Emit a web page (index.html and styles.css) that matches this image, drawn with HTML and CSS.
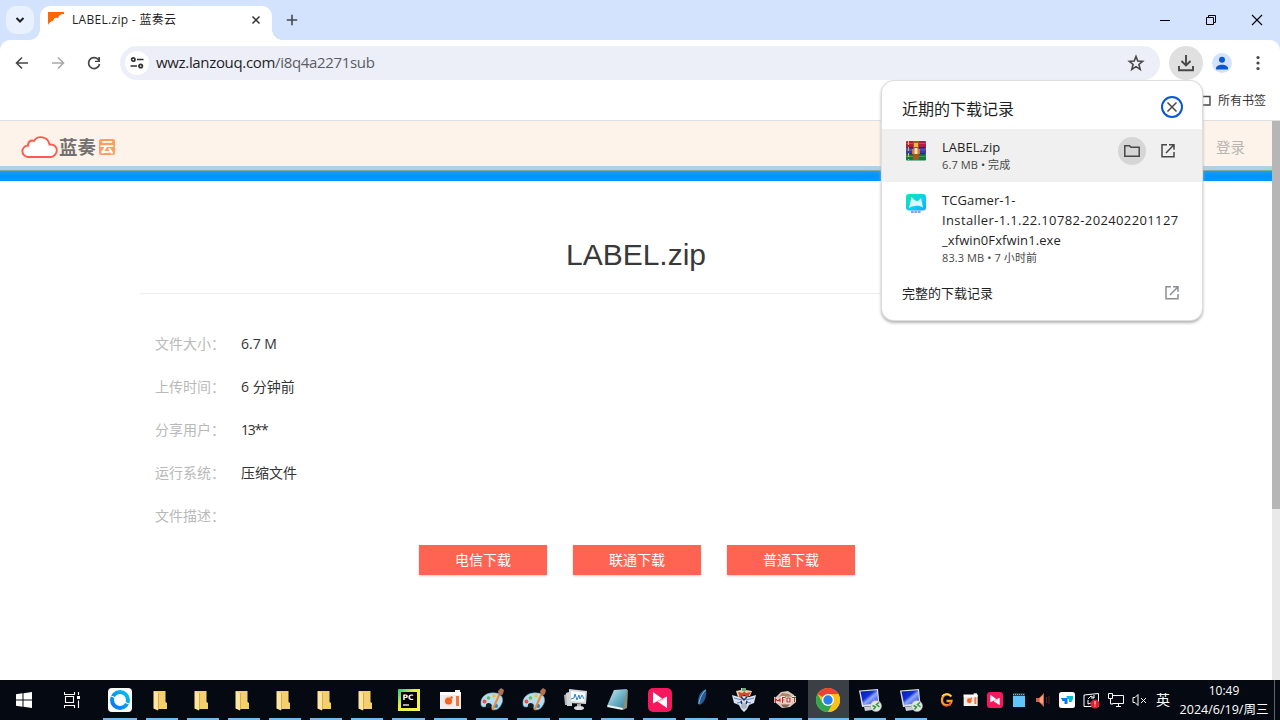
FILE: index.html
```html
<!DOCTYPE html>
<html lang="zh-CN">
<head>
<meta charset="utf-8">
<title>LABEL.zip - 蓝奏云</title>
<link rel="stylesheet" href="styles.css">
</head>
<body>
<svg class="defs" width="0" height="0">
  <defs>
    <linearGradient id="fold" x1="0" x2="1"><stop offset="0" stop-color="#f3cf74"/><stop offset="1" stop-color="#f5cf6b"/></linearGradient>
    <linearGradient id="screen" x1="0" x2="1" y2="1"><stop offset="0" stop-color="#0618b8"/><stop offset=".4" stop-color="#1230d8"/><stop offset=".55" stop-color="#8fa8fa"/><stop offset="1" stop-color="#1930c8"/></linearGradient>
    <linearGradient id="pcg" x1="0" y1="0" x2="1" y2="1"><stop offset="0" stop-color="#12ce83"/><stop offset=".4" stop-color="#e8ef3c"/><stop offset="1" stop-color="#fcf84a"/></linearGradient>
    <linearGradient id="note" x1="0" y1="0" x2="1" y2="1"><stop offset="0" stop-color="#d4f0f5"/><stop offset=".5" stop-color="#72b4c8"/><stop offset="1" stop-color="#367d94"/></linearGradient>
    <linearGradient id="tc" x1="0" y1="0" x2="1" y2="1"><stop offset="0" stop-color="#0be9a5"/><stop offset=".6" stop-color="#10ccf5"/><stop offset="1" stop-color="#12a6ff"/></linearGradient>
    <linearGradient id="ring" x1="0" y1="1" x2="1" y2="0"><stop offset="0" stop-color="#0874ff"/><stop offset="1" stop-color="#0bc1e2"/></linearGradient>
    <symbol id="folder" viewBox="0 0 24 24"><path d="M4 3h11.500v11l1.500 1v6H4z" fill="url(#fold)"/><path d="M3.500 3L8 5v17.500l-4.500-2z" fill="#ffe5a0"/><path d="M8 5v17.500L9 20V5z" fill="#d9ac50"/></symbol>
    <symbol id="recorder" viewBox="0 0 24 24"><path d="M1 4h15V2h5v2h1v17H1z" fill="#eee"/><path d="M1 4h21v3H1z" fill="#fff"/><circle cx="9.500" cy="13" r="5" fill="#fbdacb"/><circle cx="9.500" cy="13" r="3.500" fill="#ee6424"/><circle cx="12.500" cy="9.500" r="1.200" fill="#e65f20"/><path d="M17 8h3v10h-3z" fill="#ef7a38"/></symbol>
    <symbol id="paint" viewBox="0 0 24 24"><path d="M1 16C0 9 7 4 15 5c8 0 9 8 6 12-2 4-6 6-9 4-1-2 1-4-1-5-2-1-4 3-7 3-2 0-3-1-3-3z" fill="#b7dcef" stroke="#72a9c7" stroke-width=".6"/><circle cx="4.500" cy="13.500" r="1.900" fill="#ed5145"/><circle cx="8.500" cy="10" r="1.800" fill="#66bc4a"/><circle cx="14" cy="8" r="1.800" fill="#f3c035"/><circle cx="8.500" cy="17.500" r="2.600" fill="#101b24"/><circle cx="16" cy="18" r="2" fill="#2781bd"/><path d="M20 5L12.500 22" stroke="#e78b34" stroke-width="2"/><path d="M19 7l-1-4 3-3 3 2-1 4-3 2z" fill="#af7350"/></symbol>
    <symbol id="pink" viewBox="0 0 24 24"><rect width="24" height="24" rx="5" fill="#f5185c"/><path d="M5 4l9 6.500L5 15.500zM19 8.500v11.500l-9.500-6.500z" fill="#fff"/><path d="M5 15.500l14-7-5 4.800-4.500.2z" fill="#fbc0d2"/></symbol>
    <symbol id="remote" viewBox="0 0 24 24"><path d="M6 19l8-1v4l-7 1z" fill="#c9ced5"/><path d="M1 2.500l19-1.500 1.500 16L4 19z" fill="#dbe0e8"/><path d="M2.500 3.500l16.500-1.300 1.200 12.800-15 2z" fill="url(#screen)"/><circle cx="18" cy="18" r="5.500" fill="#e4e5e2" stroke="#aaa" stroke-width=".5"/><path d="M14.500 17.500l3 1.500-2 2.500M21 14.500l-2.500 2 3 2.500" fill="none" stroke="#2c9d41" stroke-width="1.500"/></symbol>
    <symbol id="launch" viewBox="0 0 16 16"><path d="M7 1.800H2v12h12V9M9 1.800h5v5M13.500 2.300L6 10" fill="none" stroke="currentColor" stroke-width="1.500"/></symbol>
  </defs>
</svg>
<div class="desktop">
  <header class="tabs">
    <button class="tab-search"><svg width="12" height="12" viewBox="0 0 12 12"><path d="M2.500 4l3.500 3.500L9.500 4" fill="none" stroke="#202124" stroke-width="2"/></svg></button>
    <div class="tab">
      <svg class="favicon" width="17" height="16" viewBox="0 0 17 16"><path d="M0 0h16v2c-4 0-5 2-6 4-3-1-4 0-5 3-2 0-4 2-5 4z" fill="#ff6700"/></svg>
      <span class="tab-title">LABEL.zip - 蓝奏云</span>
      <svg class="tab-close" width="10" height="10" viewBox="0 0 10 10"><path d="M1.500 1.500l7 7M8.500 1.500l-7 7" stroke="#303134" stroke-width="1.500"/></svg>
    </div>
    <svg class="new-tab" width="12" height="12" viewBox="0 0 12 12"><path d="M6 .8v10.400M.8 6h10.400" stroke="#43474e" stroke-width="1.600"/></svg>
    <div class="window-buttons">
      <svg width="12" height="12" viewBox="0 0 12 12"><path d="M1 6.500h10" stroke="#000"/></svg>
      <svg width="12" height="12" viewBox="0 0 12 12"><path d="M1.500 3.500h7v7h-7zM3.500 3V1.500h7v7H9" fill="none" stroke="#000"/></svg>
      <svg width="12" height="12" viewBox="0 0 12 12"><path d="M1 1l10 10M11 1L1 11" stroke="#000" stroke-width="1.100"/></svg>
    </div>
  </header>
  <nav class="toolbar">
    <svg class="nav-icon" viewBox="0 0 16 16"><path d="M14 8H3M8 2.500L2.500 8 8 13.500" fill="none" stroke="#474747" stroke-width="1.600"/></svg>
    <svg class="nav-icon" viewBox="0 0 16 16"><path d="M2 8h11M8 2.500L13.500 8 8 13.500" fill="none" stroke="#aaa" stroke-width="1.600"/></svg>
    <svg class="nav-icon" viewBox="0 0 16 16"><path d="M13.500 9A5.500 5.500 0 1 1 12 4.200L13.300 6" fill="none" stroke="#474747" stroke-width="1.700"/><path d="M14 2v5H9V5.700h3.300V2z" fill="#474747"/></svg>
    <div class="address">
      <span class="site-info"><svg width="14" height="14" viewBox="0 0 14 14"><g fill="none" stroke="#303134" stroke-width="1.700"><circle cx="3.300" cy="3.500" r="1.700"/><circle cx="10.700" cy="10" r="1.700"/><path d="M7 3.500h6.500M.5 10H7"/></g></svg></span>
      <span class="url">wwz.lanzouq.com<span class="url-path">/i8q4a2271sub</span></span>
      <svg class="star" width="18" height="18" viewBox="0 0 18 18"><path d="M9 2.500l1.800 4.600 4.800.3-3.700 3.100 1.300 4.900L9 12.700l-4.200 2.700 1.300-4.900-3.700-3.100 4.800-.3z" fill="none" stroke="#474747" stroke-width="1.600"/></svg>
    </div>
    <span class="dl-button"><svg width="18" height="18" viewBox="0 0 18 18"><path d="M9 1v10M4.500 7L9 11.500 13.500 7M2 12v4.200h14V12" fill="none" stroke="#474747" stroke-width="1.900"/></svg></span>
    <span class="profile"><svg width="20" height="20" viewBox="0 0 20 20"><circle cx="10" cy="6.700" r="3" fill="#0b57d0"/><path d="M4 15.500c0-5 12-5 12 0v1H4z" fill="#0b57d0"/></svg></span>
    <svg class="more" width="4" height="16" viewBox="0 0 4 16"><g fill="#474747"><circle cx="2" cy="2.500" r="1.600"/><circle cx="2" cy="8" r="1.600"/><circle cx="2" cy="13.500" r="1.600"/></g></svg>
  </nav>
  <div class="bookmarks"><svg width="14" height="14" viewBox="0 0 14 14"><path d="M1 3.500h12v8.500H1z" fill="none" stroke="#474747" stroke-width="1.400"/></svg><span>所有书签</span></div>
  <main class="viewport">
    <div class="page">
      <div class="site-head">
        <svg class="cloud" width="38" height="24" viewBox="0 0 38 24"><path d="M7 22a5.700 5.700 0 0 1 .3-11.500C6.500 7 10 4.500 13 6c3.500-6 14-5 15.500 3.500 5-.5 7.500 3 7.300 6S33 22 30 22z" fill="#fff" stroke="#fb5a4c" stroke-width="1.900"/></svg>
        <b class="brand">蓝奏</b><b class="brand-yun">云</b>
        <span class="login">登录</span>
      </div>
      <div class="stripe-pale"></div><div class="stripe-blue"></div>
      <h1 class="file-name">LABEL.zip</h1>
      <dl class="info">
        <dt>文件大小：</dt><dd>6.7 M</dd>
        <dt>上传时间：</dt><dd>6 分钟前</dd>
        <dt>分享用户：</dt><dd class="user">13**</dd>
        <dt>运行系统：</dt><dd>压缩文件</dd>
        <dt>文件描述：</dt><dd></dd>
      </dl>
      <div class="actions"><a>电信下载</a><a>联通下载</a><a>普通下载</a></div>
    </div>
    <div class="scrollbar"><div class="thumb"></div></div>
  </main>
  <footer class="taskbar">
    <div class="start"><svg width="16" height="16" viewBox="0 0 16 16"><path d="M0 2.300L6.500 1.300v6.200H0zM7.500 1.200L16 0v7.500H7.500zM0 8.500h6.500v6.200L0 13.700zM7.500 8.500H16V16l-8.500-1.200z" fill="#fff"/></svg></div>
    <div class="task-view"><svg width="17" height="16" viewBox="0 0 17 16"><path d="M.5 0v2.500h10V0M1.500 4.500h8v6h-8zM.5 16v-2.500h10V16M14.500 0v3M14.500 8.500V16" fill="none" stroke="#fff" stroke-width="1.100"/><path d="M13 4h3v3h-3z" fill="#fff"/></svg></div>
    <div class="apps">
      <div class="app"><svg viewBox="0 0 24 24"><rect width="24" height="24" rx="4" fill="#fff"/><circle cx="12" cy="12" r="8" fill="none" stroke="url(#ring)" stroke-width="4"/><path d="M3 8l5 2M16 14l5 2" stroke="#fff" stroke-width="1.300"/></svg></div>
      <div class="app narrow"><svg viewBox="0 0 24 24"><use href="#folder"/></svg></div>
      <div class="app narrow"><svg viewBox="0 0 24 24"><use href="#folder"/></svg></div>
      <div class="app narrow"><svg viewBox="0 0 24 24"><use href="#folder"/></svg></div>
      <div class="app narrow"><svg viewBox="0 0 24 24"><use href="#folder"/></svg></div>
      <div class="app narrow"><svg viewBox="0 0 24 24"><use href="#folder"/></svg></div>
      <div class="app narrow"><svg viewBox="0 0 24 24"><use href="#folder"/></svg></div>
      <div class="app"><svg viewBox="0 0 24 24"><path d="M1 1h22v22H1z" fill="url(#pcg)"/><path d="M4 4h16v16H4z"/><text x="5.500" y="12" class="pc">PC</text><path d="M6 17h6" stroke="#fff" stroke-width="1.300"/></svg></div>
      <div class="app"><svg viewBox="0 0 24 24"><use href="#recorder"/></svg></div>
      <div class="app narrow"><svg viewBox="0 0 24 24"><use href="#paint"/></svg></div>
      <div class="app"><svg viewBox="0 0 24 24"><use href="#paint"/></svg></div>
      <div class="app"><svg viewBox="0 0 24 24"><path d="M0 7l6-2v12H1z" fill="#aeb4b6"/><path d="M2 5l6-2v15H3z" fill="#d2d5d5"/><path d="M5 1l18 2-1 13-17-1z" fill="#d4d8d9"/><path d="M7 3l14 1.500-.7 9.500L7 13z" fill="#f7fbff"/><path d="M7 11l3-1 1-4 2 6 2-5 1 4 2-4 2 4" fill="none" stroke="#3184c4"/><path d="M13 16h4v3h-4z" fill="#aaa"/><ellipse cx="15" cy="20" rx="5" ry="2" fill="#ddd"/></svg></div>
      <div class="app"><svg viewBox="0 0 24 24"><path d="M8 2h14l-1 18-4 2z" fill="#8b8d78"/><path d="M8 2l13-1-4 20L1 18z" fill="url(#note)"/><path d="M2 17l15 3-.5 2L1 19z" fill="#edf1ed"/></svg></div>
      <div class="app"><svg viewBox="0 0 24 24"><use href="#pink"/></svg></div>
      <div class="app"><svg viewBox="0 0 24 24"><path d="M16 1c-7 3-8 8-8 15l2 1c5-3 7-9 6-16z" fill="#235b94"/><path d="M15.500 2C11 7 9 12 8.700 18" fill="none" stroke="#9bc0dd"/><path d="M9 16l-1 7" stroke="#02050a" stroke-width="1.500"/></svg></div>
      <div class="app"><svg viewBox="0 0 24 24"><path d="M0 7l7 2 5-1 5 1 7-2-2 8-5 2-2 4-3 3-3-3-2-4-5-2z" fill="#d5e2f3"/><path d="M4 3l5-1V0h5v2l6 1-2 5-6-1-6 2z" fill="#e7d5b6"/><path d="M6 4l5 1 1-2 2 2 5-1-3 5-4-2-4 3z" fill="#d64627"/><path d="M10 0h4v3h-4z" fill="#59ad80"/><path d="M2 10l8 2M22 10l-8 2M5 15l5-1M14 14l5 1" stroke="#6c86bb" stroke-width="1.200" fill="none"/><path d="M9 9l3 3 3-3M9 13l1 3M15 13l-1 3" stroke="#24314b" stroke-width="1.500" fill="none"/><circle cx="12" cy="18" r="3" fill="#adb5c3"/></svg></div>
      <div class="app"><svg viewBox="0 0 24 24"><path d="M2 9l5-5 7-1 6 4 2 7-6 5-8 1-6-5z" fill="#d8cabb"/><path d="M8 5l7 1 3 3-8 2-5-2z" fill="#ad8567"/><path d="M1.500 15v-4l2.500 2 2-2v3M8.500 15V9.500h2.500M8.500 12h2M13 10h3v4h-3zM18 9.500h4M20.500 9v5" fill="none" stroke="#fff" stroke-width="2.500"/><path d="M1.500 15v-4l2.500 2 2-2v3M8.500 15V9.500h2.500M8.500 12h2M13 10h3v4h-3zM18 9.500h4M20.500 9v5" fill="none" stroke="#c12622" stroke-width="1.200"/><path d="M7 16.500h9l-3 2.500h-4z" fill="#8b6152"/></svg></div>
      <div class="app active"><svg viewBox="0 0 24 24"><circle cx="12" cy="12" r="12" fill="#fbc116"/><path d="M12 12L1.600 6A12 12 0 0 1 22.400 6z" fill="#e94335"/><path d="M12 12l5 3-5 9A12 12 0 0 1 1.600 6l5 9z" fill="#32a753"/><path d="M12 6h10.400A12 12 0 0 1 12 24l5-9z" fill="#fbc116"/><circle cx="12" cy="12" r="6" fill="#fff"/><circle cx="12" cy="12" r="4.700" fill="#2582ee"/></svg></div>
      <div class="app narrow"><svg viewBox="0 0 24 24"><use href="#remote"/></svg></div>
      <div class="app narrow"><svg viewBox="0 0 24 24"><use href="#remote"/></svg></div>
    </div>
    <div class="tray">
      <svg width="16" height="16" viewBox="0 0 16 16"><path d="M12.500 4.500C8 0 3 3 3 8c0 6.500 9 7 9.500 1H7.500" fill="none" stroke="#ff9e30" stroke-width="2.300"/><path d="M3 4c3-3 7-2 9 0" fill="none" stroke="#ffdc55" stroke-width="1.300"/><path d="M4 13c3 2 7 1 8-3" fill="none" stroke="#ec493d" stroke-width="1.300"/></svg>
      <svg width="16" height="16" viewBox="0 0 24 24"><use href="#recorder"/></svg>
      <svg width="16" height="16" viewBox="0 0 24 24"><use href="#pink"/></svg>
      <svg width="16" height="16" viewBox="0 0 16 16"><path d="M2 1h12v14H2z" fill="#61c4fa"/><path d="M2 1h12v3H2z" fill="#283e4c"/><path d="M2 2.500h12" stroke="#9aa8b0" stroke-dasharray="1 1"/></svg>
      <svg width="16" height="16" viewBox="0 0 16 16"><path d="M1 6h3l5-5v14l-5-5H1z" fill="#ca6442"/><path d="M4.500 6.500L8 3v9l-3.500-2z" fill="#f3a27d"/><path d="M11.500 5v6M14 4v8" stroke="#552419"/></svg>
      <svg width="16" height="16" viewBox="0 0 16 16"><rect width="16" height="16" rx="2.500" fill="#fff"/><path d="M2 6h6.500v6H5.500V9H3.500z" fill="#0b78ef"/><path d="M7.500 4H14v3l-1.500 3H10V7H8z" fill="#04bcd4"/></svg>
      <svg width="17" height="17" viewBox="0 0 17 17"><path d="M1 3l14.500-1.500V14.500H1zM5 7l3-3 3 2M11 3v3H8M5 8v4l3-1" fill="none" stroke="#fff"/><circle cx="12" cy="12" r="4.500" fill="#dc1f2e"/><path d="M12 9v3.500M12 13.500v1" stroke="#fff"/></svg>
      <svg width="16" height="16" viewBox="0 0 16 16"><path d="M4.500 3.500h11v8h-11M8 14.500h5M10.500 12v3M.5 1.500h4v5h-4zM2.500 7v5H5" fill="none" stroke="#fff"/></svg>
      <svg width="16" height="16" viewBox="0 0 16 16"><path d="M1 5.500h2l3-3v11l-3-3H1zM9 6l5 5M14 6l-5 5" fill="none" stroke="#fff"/></svg>
    </div>
    <span class="ime">英</span>
    <div class="clock"><span>10:49</span><span class="date">2024/6/19/周三</span></div>
    <div class="show-desktop"></div>
  </footer>
  <section class="downloads">
    <div class="dl-head"><span>近期的下载记录</span><button class="dl-close"><svg width="12" height="12" viewBox="0 0 12 12"><path d="M1.500 1.500l9 9M10.500 1.500l-9 9" stroke="#474747" stroke-width="1.500"/></svg></button></div>
    <div class="dl-row selected">
      <svg class="file-icon" width="20" height="20" viewBox="0 0 20 20"><rect y="0" width="20" height="7" rx="1" fill="#b21d46"/><rect y="7" width="20" height="6" rx="1" fill="#353aac"/><rect y="13" width="20" height="6.500" rx="1" fill="#137b3f"/><path d="M0 6.500h20M0 12.800h20" stroke="#17152e" stroke-opacity=".6"/><path d="M0 2.500h20M0 9h20M0 15.500h20" stroke="#fff" stroke-opacity=".2"/><path d="M2.500 0v19" stroke="#e9b93b" stroke-width="1.200" stroke-dasharray="4 2"/><path d="M7 0h6v19H7z" fill="#a85719"/><path d="M8 2h4v4H8z" fill="#f6b63e"/><path d="M6 8h8v5H6z" fill="#d8792b"/><path d="M8.500 7h3v6h-3z" fill="#f2e3c5"/></svg>
      <div class="dl-text"><span class="dl-name zip">LABEL.zip</span><span class="dl-meta">6.7 MB • 完成</span></div>
      <div class="dl-actions"><span class="folder-btn"><svg width="18" height="16" viewBox="0 0 18 16"><path d="M1.800 2.800h4.700l1.500 1.500h8.200v9H1.800z" fill="none" stroke="#474747" stroke-width="1.500"/></svg></span><svg class="launch" width="16" height="16"><use href="#launch"/></svg></div>
    </div>
    <div class="dl-row installer">
      <svg class="file-icon" width="20" height="20" viewBox="0 0 20 20"><rect width="20" height="16.500" rx="3" fill="url(#tc)"/><path d="M5.500 3L9 6.500l3 .5 3-3 2 9.500c-4-2.500-10-2-14 .5z" fill="#dff8ff"/><path d="M5 17.800h10" stroke="#8da2f4" stroke-width="2.500" stroke-dasharray="2.800 .6"/></svg>
      <div class="dl-text"><span class="dl-name">TCGamer-1-<br><span class="long-name">Installer-1.1.22.10782-202402201127</span><br>_xfwin0Fxfwin1.exe</span><span class="dl-meta">83.3 MB • 7 小时前</span></div>
    </div>
    <div class="dl-all"><span>完整的下载记录</span><svg width="16" height="16"><use href="#launch"/></svg></div>
  </section>
</div>
</body>
</html>
```
FILE: styles.css
```css
* { box-sizing: border-box; }
body { margin: 0; overflow: hidden; font-family: "Open Sans", "Noto Sans CJK SC", sans-serif; }
button { border: 0; padding: 0; }
svg { display: block; flex: none; }
.defs { position: absolute; }
.desktop { position: relative; width: 1280px; height: 720px; display: flex; flex-direction: column; background: #fff; overflow: hidden; white-space: nowrap; }
.desktop::before { content: ""; position: absolute; top: 40px; left: 0; width: 1280px; height: 10px; background: #d3e3fd; }

.tabs { height: 40px; flex: none; display: flex; background: #d3e3fd; }
.tab-search { width: 28px; height: 28px; margin: 6px 6px 0; border-radius: 10px; background: #e9f1fe; display: grid; place-items: center; }
.tab { position: relative; width: 232px; height: 34px; margin-top: 6px; padding: 0 11px 6px 8px; display: flex; align-items: center; background: #fff; border-radius: 10px 10px 0 0; }
.tab::before, .tab::after { content: ""; position: absolute; bottom: 0; width: 10px; height: 10px; }
.tab::before { left: -10px; background: radial-gradient(circle at 0 0, transparent 9.5px, #fff 10px); }
.tab::after { right: -10px; background: radial-gradient(circle at 100% 0, transparent 9.5px, #fff 10px); }
.favicon { margin-right: 7px; }
.tab-title { flex: 1; padding-bottom: 2px; font-size: 12px; letter-spacing: .3px; color: #1f1f1f; }
.new-tab { margin: 14px 0 0 14px; }
.window-buttons { margin-left: auto; display: flex; gap: 34px; padding: 14px 17px 0 0; }

.toolbar { position: relative; height: 46px; flex: none; display: flex; align-items: center; padding-left: 14px; background: #fff; border-radius: 10px 10px 0 0; }
.nav-icon { width: 16px; height: 16px; margin-right: 20px; }
.address { width: 1040px; height: 34px; margin-left: -2px; padding: 0 15px 0 5px; display: flex; align-items: center; border-radius: 17px; background: #eceef8; }
.site-info { width: 24px; height: 24px; border-radius: 50%; background: #fff; display: grid; place-items: center; }
.url { flex: 1; margin-left: 7px; padding-bottom: 2px; font-size: 15px; letter-spacing: -.33px; color: #1f1f1f; }
.url-path { color: #5b5d61; }
.dl-button { width: 34px; height: 34px; margin-left: 9px; border-radius: 50%; background: #e0e0e0; display: grid; place-items: center; }
.profile { width: 20px; height: 20px; margin-left: 9px; border-radius: 50%; background: #d3e3fd; }
.more { margin-left: 24px; }
.bookmarks { height: 35px; flex: none; display: flex; justify-content: flex-end; align-items: center; gap: 7px; padding: 0 14px 7px 0; border-bottom: 1px solid #dedfe1; font-size: 12px; color: #333; }

.viewport { height: 559px; flex: none; display: flex; }
.page { width: 1272px; display: flex; flex-direction: column; }
.site-head { height: 45px; flex: none; display: flex; align-items: center; padding: 7px 27px 0 21px; background: #fef3ea; }
.brand { padding-bottom: 2px; font-size: 18.500px; color: #737170; }
.brand-yun { width: 16px; height: 16px; margin-left: 3px; border-radius: 2px; background: #ff9d5c; color: #fff; font-size: 14px; line-height: 15px; text-align: center; }
.login { margin-left: auto; padding-bottom: 1px; font-size: 14.500px; color: #b9b5b2; }
.stripe-pale { height: 5px; flex: none; background: linear-gradient(#abd3e8 4px, #81a99c 4px); }
.stripe-blue { height: 10px; flex: none; background: linear-gradient(#249ae8, #0096ff 4px); }
.file-name { width: 992px; height: 113px; margin: 0 auto; padding-top: 55px; border-bottom: 1px solid #ededed; font: 400 30px/38px "Liberation Sans", sans-serif; color: #393939; text-align: center; }
.info { display: grid; grid-template-columns: 86px auto; grid-auto-rows: 43px; line-height: 43px; margin: 28px 0 0 155px; font-size: 14px; }
.info dt { color: #b9b9b9; }
.info dd { margin: 0; color: #333; }
.info .user { letter-spacing: -1.2px; }
.actions { display: flex; gap: 26px; margin: 8px 0 0 419px; }
.actions a { width: 128px; height: 30px; background: #ff6452; color: #fff; font-size: 14px; line-height: 30px; text-align: center; box-shadow: 0 1px 2px #ccc; }
.scrollbar { width: 8px; background: #e9e9e9; }
.thumb { height: 388px; background: #b6b6b6; }

.taskbar { height: 40px; flex: none; display: flex; background: #050a12; color: #fff; }
.start, .task-view { width: 48px; display: grid; place-items: center; }
.apps { display: flex; margin-left: 3px; }
.app { position: relative; width: 42px; display: grid; place-items: center; }
.app svg { width: 24px; height: 24px; }
.app:nth-child(n + 2) svg { margin-left: 1px; }
.app::after { content: ""; position: absolute; left: 5px; right: 4px; bottom: 0; height: 2px; background: #76b9ed; }
.app:first-child::after { left: 4px; }
.narrow { width: 41px; }
.apps .active { width: 41px; margin-left: 2px; background: #3b4047; }
.apps .active svg { margin-left: -1px; }
.apps .active::after { left: 0; right: 0; }
.pc { font: 700 7.500px "DejaVu Sans", sans-serif; fill: #fff; }
.tray { display: flex; align-items: center; gap: 8px; margin-left: auto; }
.ime { margin-left: 8px; font-size: 14px; line-height: 40px; }
.clock { width: 90px; margin-left: 9px; padding-top: 2px; display: flex; flex-direction: column; text-align: center; font-size: 12px; line-height: 18px; }
.date { padding-top: 1px; font-size: 12.500px; }
.show-desktop { width: 6px; margin-left: 5px; border-left: 1px solid #606468; }

.downloads { position: absolute; left: 882px; top: 81px; width: 320px; height: 239px; background: #fff; border-radius: 12px; box-shadow: 0 0 0 1px #dedede, 0 2px 3px 1px #b5b5b5; color: #1f1f1f; display: flex; flex-direction: column; }
.dl-head { height: 48px; display: flex; justify-content: space-between; align-items: center; padding: 4px 19px 0 20px; font-size: 16px; }
.dl-head span { padding-top: 1px; }
.dl-close { width: 22px; height: 22px; border: 2px solid #0b57d0; border-radius: 50%; background: #fff; display: grid; place-items: center; }
.dl-row { display: flex; padding: 0 20px 0 24px; }
.selected { height: 53px; background: #f0f0f0; }
.file-icon { margin-top: 12px; }
.dl-text { display: flex; flex-direction: column; margin: 8px 0 0 16px; }
.dl-name { font-size: 13px; line-height: 20px; letter-spacing: .1px; }
.zip { letter-spacing: 0; }
.long-name { letter-spacing: .37px; }
.dl-meta { font-size: 11px; line-height: 15px; letter-spacing: .1px; color: #474747; }
.dl-actions { display: flex; align-items: flex-start; margin: 8px 0 0 auto; color: #474747; }
.folder-btn { width: 28px; height: 28px; border-radius: 50%; background: #d6d6d6; display: grid; place-items: center; }
.launch { margin: 6px 6px 0 14px; }
.installer { height: 90px; }
.dl-all { height: 42px; display: flex; align-items: center; justify-content: space-between; padding: 0 22px 0 20px; font-size: 13px; }
.dl-all span { padding-bottom: 2px; }
.dl-all svg { color: #8b8f94; }
```
